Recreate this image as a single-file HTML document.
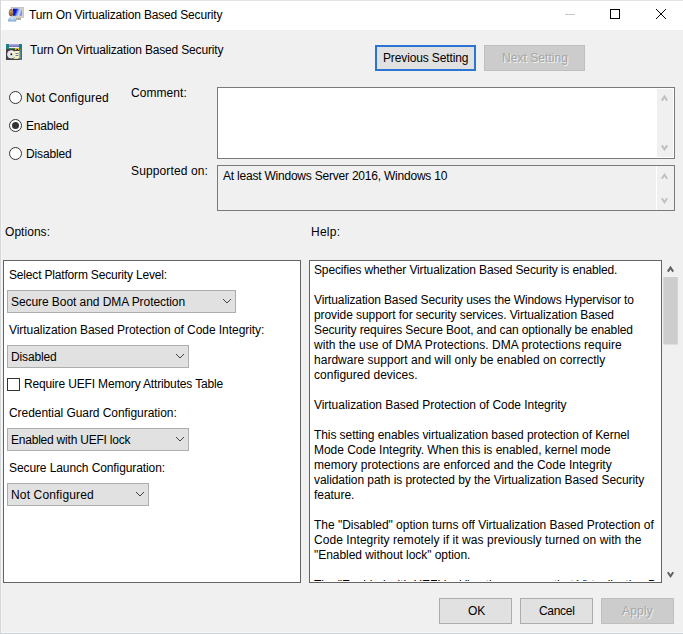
<!DOCTYPE html>
<html><head><meta charset="utf-8">
<style>
html,body{margin:0;padding:0;}
body{width:683px;height:634px;overflow:hidden;position:relative;background:#f0f0f0;font-family:"Liberation Sans",sans-serif;font-size:12px;color:#000;}
.a{position:absolute;}
.t{position:absolute;white-space:nowrap;line-height:15px;font-size:12px;}
.hl{white-space:nowrap;line-height:15px;height:15px;}
.btn{position:absolute;box-sizing:border-box;background:#e1e1e1;border:1px solid #adadad;}
.dis{background:#cccccc;border-color:#bfbfbf;}
.combo{position:absolute;box-sizing:border-box;background:#e1e1e1;border:1px solid #adadad;}
.chev{position:absolute;}
.radio{position:absolute;box-sizing:border-box;width:13px;height:13px;border:1px solid #333;border-radius:50%;background:#fff;}
</style></head><body>
<!-- window borders -->
<div class="a" style="left:1px;top:30px;width:1px;height:603px;background:#f6f6f6"></div>
<div class="a" style="left:0;top:632px;width:683px;height:1px;background:#f6f6f6"></div>
<div class="a" style="left:0;top:0;width:683px;height:1px;background:#e2e4e4"></div>
<div class="a" style="left:0;top:0;width:1px;height:634px;background:#d5d8da"></div>
<div class="a" style="left:0;top:633px;width:683px;height:1px;background:#cfd2d5"></div>
<!-- title bar -->
<div class="a" style="left:1px;top:1px;width:682px;height:29px;background:#fff"></div>
<svg class="a" style="left:7px;top:6px" width="18" height="17" viewBox="0 0 18 17">
 <defs>
  <linearGradient id="scr" x1="0" y1="0" x2="1" y2="0.3"><stop offset="0" stop-color="#0006b0"/><stop offset="0.4" stop-color="#0a22d8"/><stop offset="0.58" stop-color="#7890f0"/><stop offset="0.8" stop-color="#d6defa"/><stop offset="1" stop-color="#7a92ee"/></linearGradient>
  <linearGradient id="hd" x1="0" y1="0" x2="0" y2="1"><stop offset="0" stop-color="#606060"/><stop offset="0.3" stop-color="#c89868"/><stop offset="1" stop-color="#7a4a20"/></linearGradient>
  <radialGradient id="bd" cx="0.5" cy="0.3" r="0.7"><stop offset="0" stop-color="#d8ecfa"/><stop offset="1" stop-color="#7aa6d8"/></radialGradient>
 </defs>
 <rect x="4" y="1" width="12.7" height="10.7" rx="0.5" fill="#d6d2ca"/>
 <rect x="4.3" y="1.3" width="12.1" height="10.1" fill="none" stroke="#bcb8b0" stroke-width="0.6"/>
 <rect x="6" y="2.7" width="9" height="7.1" fill="url(#scr)"/>
 <rect x="9" y="12" width="5" height="2" fill="#b0aca4"/>
 <path d="M1 15.6Q0.8 11 5 10.2Q9.3 11 9.3 15.6Z" fill="url(#bd)"/>
 <ellipse cx="4" cy="6.6" rx="2.3" ry="3.6" fill="url(#hd)"/>
</svg>
<div class="t" style="left:29px;top:8px;letter-spacing:-0.167px;">Turn On Virtualization Based Security</div>
<!-- min/max/close -->
<div class="a" style="left:565px;top:14px;width:10px;height:1px;background:#c8c8c8"></div>
<div class="a" style="left:610px;top:9px;width:10px;height:10px;box-sizing:border-box;border:1px solid #000"></div>
<svg class="a" style="left:655px;top:8px" width="12" height="12" viewBox="0 0 12 12"><path d="M1 1L11 11M11 1L1 11" stroke="#000" stroke-width="1"/></svg>

<!-- header -->
<svg class="a" style="left:6px;top:44px" width="16" height="16" viewBox="0 0 16 16">
 <defs>
  <linearGradient id="pb" x1="0" y1="0" x2="0" y2="1"><stop offset="0" stop-color="#b8b8e8"/><stop offset="1" stop-color="#6a68b0"/></linearGradient>
 </defs>
 <rect x="0" y="0" width="16" height="16" fill="#444"/>
 <rect x="0" y="0" width="3" height="5" fill="#1f7f80"/>
 <rect x="13" y="0" width="3" height="16" fill="#1f7f80"/>
 <rect x="14" y="5" width="1" height="11" fill="#5a8a8a"/>
 <rect x="3" y="0" width="10" height="3" fill="url(#pb)"/>
 <rect x="3" y="3" width="10" height="1" fill="#f0f0f8"/>
 <rect x="3" y="4" width="6" height="1" fill="#3a8a3a"/>
 <rect x="9" y="4" width="4" height="2" fill="#e8b820"/>
 <rect x="10.5" y="5" width="1.5" height="1" fill="#111"/>
 <circle cx="5.3" cy="10.3" r="3.9" fill="#f4f4f4"/>
 <path d="M5.3 10.3L5.3 6.4A3.9 3.9 0 0 1 9.2 10.3Z" fill="#e8f4d8"/>
 <path d="M5.3 10.3L1.4 10.3A3.9 3.9 0 0 1 5.3 6.4Z" fill="#f4e0ec"/>
 <path d="M5.3 10.3L5.3 14.2A3.9 3.9 0 0 1 1.4 10.3Z" fill="#e4e4f8"/>
 <path d="M5.3 10.3L9.2 10.3A3.9 3.9 0 0 1 5.3 14.2Z" fill="#dcf0d0"/>
 <circle cx="5.3" cy="10.3" r="1" fill="#222"/>
 <rect x="8.5" y="7" width="5" height="7" fill="#f6f0c8"/>
 <rect x="9.5" y="9" width="3" height="1" fill="#7a7a98"/>
 <rect x="9.5" y="11" width="3" height="1" fill="#7a7a98"/>
 <rect x="7.5" y="14" width="5" height="1" fill="#e8dc98"/>
</svg>
<div class="t" style="left:30px;top:43px;letter-spacing:-0.167px;">Turn On Virtualization Based Security</div>
<div class="btn" style="left:375px;top:45px;width:101px;height:26px;border:2px solid #2a74d4;"></div>
<div class="t" style="left:383px;top:51px;letter-spacing:-0.133px;">Previous Setting</div>
<div class="btn dis" style="left:484px;top:45px;width:101px;height:26px;"></div>
<div class="t" style="left:502px;top:51px;letter-spacing:0.045px;color:#a6a6a6;text-shadow:1px 1px 0 rgba(255,255,255,0.75)">Next Setting</div>

<!-- radios -->
<div class="radio" style="left:9px;top:91px"></div>
<div class="t" style="left:26px;top:91px;letter-spacing:0.154px;">Not Configured</div>
<div class="radio" style="left:9px;top:119px"><div class="a" style="left:2px;top:2px;width:7px;height:7px;border-radius:50%;background:#333"></div></div>
<div class="t" style="left:26px;top:119px;letter-spacing:-0.167px;">Enabled</div>
<div class="radio" style="left:9px;top:147px"></div>
<div class="t" style="left:26px;top:147px;letter-spacing:-0.143px;">Disabled</div>

<div class="t" style="left:131px;top:86px;letter-spacing:0.071px;">Comment:</div>
<div class="t" style="left:131px;top:164px;letter-spacing:0.125px;">Supported on:</div>

<!-- comment box -->
<div class="a" style="left:217px;top:87px;width:458px;height:72px;box-sizing:border-box;border:1px solid #7a7a7a;background:#fff"></div>
<div class="a" style="left:657px;top:89px;width:16px;height:68px;background:#f0f0f0"></div>
<svg class="a" style="left:0;top:0" width="683" height="634" viewBox="0 0 683 634"><path d="M661.8 100.6 L664.5 96.6 L667.2 100.6" stroke="#c0c0c0" stroke-width="2" fill="none" stroke-linejoin="miter"/><path d="M661.8 145.39999999999998 L664.5 149.39999999999998 L667.2 145.39999999999998" stroke="#c0c0c0" stroke-width="2" fill="none" stroke-linejoin="miter"/></svg>
<!-- supported box -->
<div class="a" style="left:217px;top:165px;width:458px;height:46px;box-sizing:border-box;border:1px solid #7a7a7a;background:#f0f0f0"></div>
<div class="a" style="left:656px;top:166px;width:1px;height:44px;background:#fff"></div>
<svg class="a" style="left:0;top:0" width="683" height="634" viewBox="0 0 683 634"><path d="M661.8 178.70000000000002 L664.5 174.70000000000002 L667.2 178.70000000000002" stroke="#c0c0c0" stroke-width="2" fill="none" stroke-linejoin="miter"/><path d="M661.8 198.2 L664.5 202.2 L667.2 198.2" stroke="#c0c0c0" stroke-width="2" fill="none" stroke-linejoin="miter"/></svg>
<div class="t" style="left:223px;top:169px;letter-spacing:-0.215px;">At least Windows Server 2016, Windows 10</div>

<div class="t" style="left:5px;top:225px;letter-spacing:0.043px;">Options:</div>
<div class="t" style="left:311px;top:225px;letter-spacing:0.25px;">Help:</div>

<!-- options panel -->
<div class="a" style="left:3px;top:260px;width:298px;height:323px;box-sizing:border-box;border:1px solid #646464;background:#fff"></div>
<div class="t" style="left:9px;top:268px;letter-spacing:-0.177px;">Select Platform Security Level:</div>
<div class="combo" style="left:7px;top:290px;width:229px;height:23px"></div>
<svg class="chev" style="left:222px;top:298px" width="11" height="7" viewBox="0 0 11 7"><path d="M1 1L5 5L9 1" stroke="#404040" stroke-width="1" fill="none"/></svg>
<div class="t" style="left:11px;top:295px;letter-spacing:-0.069px;">Secure Boot and DMA Protection</div>
<div class="t" style="left:9px;top:323px;letter-spacing:-0.052px;">Virtualization Based Protection of Code Integrity:</div>
<div class="combo" style="left:7px;top:345px;width:182px;height:23px"></div>
<svg class="chev" style="left:175px;top:353px" width="11" height="7" viewBox="0 0 11 7"><path d="M1 1L5 5L9 1" stroke="#404040" stroke-width="1" fill="none"/></svg>
<div class="t" style="left:11px;top:350px;letter-spacing:-0.143px;">Disabled</div>
<div class="a" style="left:7px;top:378px;width:13px;height:13px;box-sizing:border-box;border:1px solid #333;background:#fff"></div>
<div class="t" style="left:24px;top:377px;letter-spacing:-0.151px;">Require UEFI Memory Attributes Table</div>
<div class="t" style="left:9px;top:406px;letter-spacing:-0.057px;">Credential Guard Configuration:</div>
<div class="combo" style="left:7px;top:428px;width:182px;height:23px"></div>
<svg class="chev" style="left:175px;top:436px" width="11" height="7" viewBox="0 0 11 7"><path d="M1 1L5 5L9 1" stroke="#404040" stroke-width="1" fill="none"/></svg>
<div class="t" style="left:11px;top:433px;letter-spacing:-0.219px;">Enabled with UEFI lock</div>
<div class="t" style="left:9px;top:461px;letter-spacing:-0.1px;">Secure Launch Configuration:</div>
<div class="combo" style="left:7px;top:483px;width:142px;height:23px"></div>
<svg class="chev" style="left:135px;top:491px" width="11" height="7" viewBox="0 0 11 7"><path d="M1 1L5 5L9 1" stroke="#404040" stroke-width="1" fill="none"/></svg>
<div class="t" style="left:11px;top:488px;letter-spacing:0.154px;">Not Configured</div>

<!-- help box -->
<div class="a" style="left:309px;top:260px;width:353px;height:323px;box-sizing:border-box;border:1px solid #646464;background:#fff;overflow:hidden">
<div class="a" style="left:0;top:0;width:351px;height:320px;overflow:hidden"><div class="a" style="left:4px;top:2px">
<div class="hl" style="letter-spacing:-0.147px">Specifies whether Virtualization Based Security is enabled.</div>
<div class="hl"></div>
<div class="hl" style="letter-spacing:-0.124px">Virtualization Based Security uses the Windows Hypervisor to</div>
<div class="hl" style="letter-spacing:-0.079px">provide support for security services. Virtualization Based</div>
<div class="hl" style="letter-spacing:-0.112px">Security requires Secure Boot, and can optionally be enabled</div>
<div class="hl" style="letter-spacing:0.04px">with the use of DMA Protections. DMA protections require</div>
<div class="hl" style="letter-spacing:0.021px">hardware support and will only be enabled on correctly</div>
<div class="hl" style="letter-spacing:0.011px">configured devices.</div>
<div class="hl"></div>
<div class="hl" style="letter-spacing:-0.042px">Virtualization Based Protection of Code Integrity</div>
<div class="hl"></div>
<div class="hl" style="letter-spacing:-0.077px">This setting enables virtualization based protection of Kernel</div>
<div class="hl" style="letter-spacing:-0.026px">Mode Code Integrity. When this is enabled, kernel mode</div>
<div class="hl" style="letter-spacing:0.004px">memory protections are enforced and the Code Integrity</div>
<div class="hl" style="letter-spacing:-0.067px">validation path is protected by the Virtualization Based Security</div>
<div class="hl" style="letter-spacing:-0.043px">feature.</div>
<div class="hl"></div>
<div class="hl" style="letter-spacing:-0.029px">The &quot;Disabled&quot; option turns off Virtualization Based Protection of</div>
<div class="hl" style="letter-spacing:0.065px">Code Integrity remotely if it was previously turned on with the</div>
<div class="hl" style="letter-spacing:-0.052px">&quot;Enabled without lock&quot; option.</div>
<div class="hl"></div>
<div class="hl" style="letter-spacing:-0.05px">The &quot;Enabled with UEFI lock&quot; option ensures that Virtualization Based</div>
</div>
</div>
</div>
<!-- help scrollbar -->
<svg class="a" style="left:0;top:0" width="683" height="634" viewBox="0 0 683 634"><path d="M667.8 271.6 L670.5 267.6 L673.2 271.6" stroke="#606060" stroke-width="2" fill="none" stroke-linejoin="miter"/><rect x="663.3" y="277" width="14.5" height="67.5" fill="#cdcdcd"/><path d="M667.8 572.2 L670.5 576.2 L673.2 572.2" stroke="#606060" stroke-width="2" fill="none" stroke-linejoin="miter"/></svg>

<!-- bottom buttons -->
<div class="btn" style="left:439px;top:598px;width:73px;height:26px"></div>
<div class="t" style="left:468px;top:604px;">OK</div>
<div class="btn" style="left:520px;top:598px;width:73px;height:26px"></div>
<div class="t" style="left:539px;top:604px;letter-spacing:-0.3px;">Cancel</div>
<div class="btn dis" style="left:601px;top:598px;width:73px;height:26px"></div>
<div class="t" style="left:622px;top:604px;letter-spacing:0.2px;color:#a6a6a6;text-shadow:1px 1px 0 rgba(255,255,255,0.75)">Apply</div>
</body></html>
